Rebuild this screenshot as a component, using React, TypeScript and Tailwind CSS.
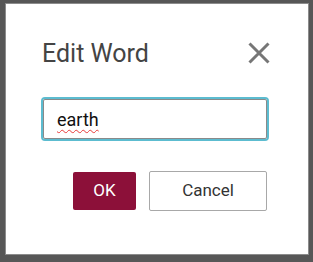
const CloseIcon = () => (
  <svg width="22" height="22" viewBox="0 0 22 22" fill="none">
    <path d="M1.5 1.5 L20.5 20.5 M20.5 1.5 L1.5 20.5" stroke="#767676" strokeWidth="3" />
  </svg>
);

const App = () => {
  return (
    <div className="h-screen w-screen bg-[#575757] pt-[3px] pl-[5px] pr-[4px] pb-[7px] font-['Roboto',sans-serif]">
      <div className="h-full border border-[#8c8c8c] bg-white pt-[35px] pl-[35px] pr-[39px]">
        {/* header */}
        <div className="flex h-[28px] items-center justify-between">
          <h2 className="ml-[1px] mt-[2px] text-[25px] leading-[28px] text-[#444]">Edit Word</h2>
          <button className="-mr-[1px] mt-[-1px]">
            <CloseIcon />
          </button>
        </div>

        {/* word field */}
        <div className="mt-[30px] rounded-[4px] border-2 border-[#5cbcd0]">
          <div className="flex h-[40px] items-center rounded-[2px] border border-[#8a8a8a] px-[13px]">
            <span className="text-[18px] text-[#111] underline decoration-wavy decoration-[#e83a3a] decoration-1 underline-offset-[3px]">
              earth
            </span>
          </div>
        </div>

        {/* actions */}
        <div className="mt-[30px] flex items-center justify-end gap-[13px] pr-[2px]">
          <button className="h-[38px] w-[63px] rounded-[2px] bg-[#8c1039] text-[17px] text-white">
            OK
          </button>
          <button className="h-[40px] w-[118px] rounded-[2px] border border-[#a8a8a8] bg-white text-[17px] text-[#333]">
            Cancel
          </button>
        </div>
      </div>
    </div>
  );
};

export default App;
